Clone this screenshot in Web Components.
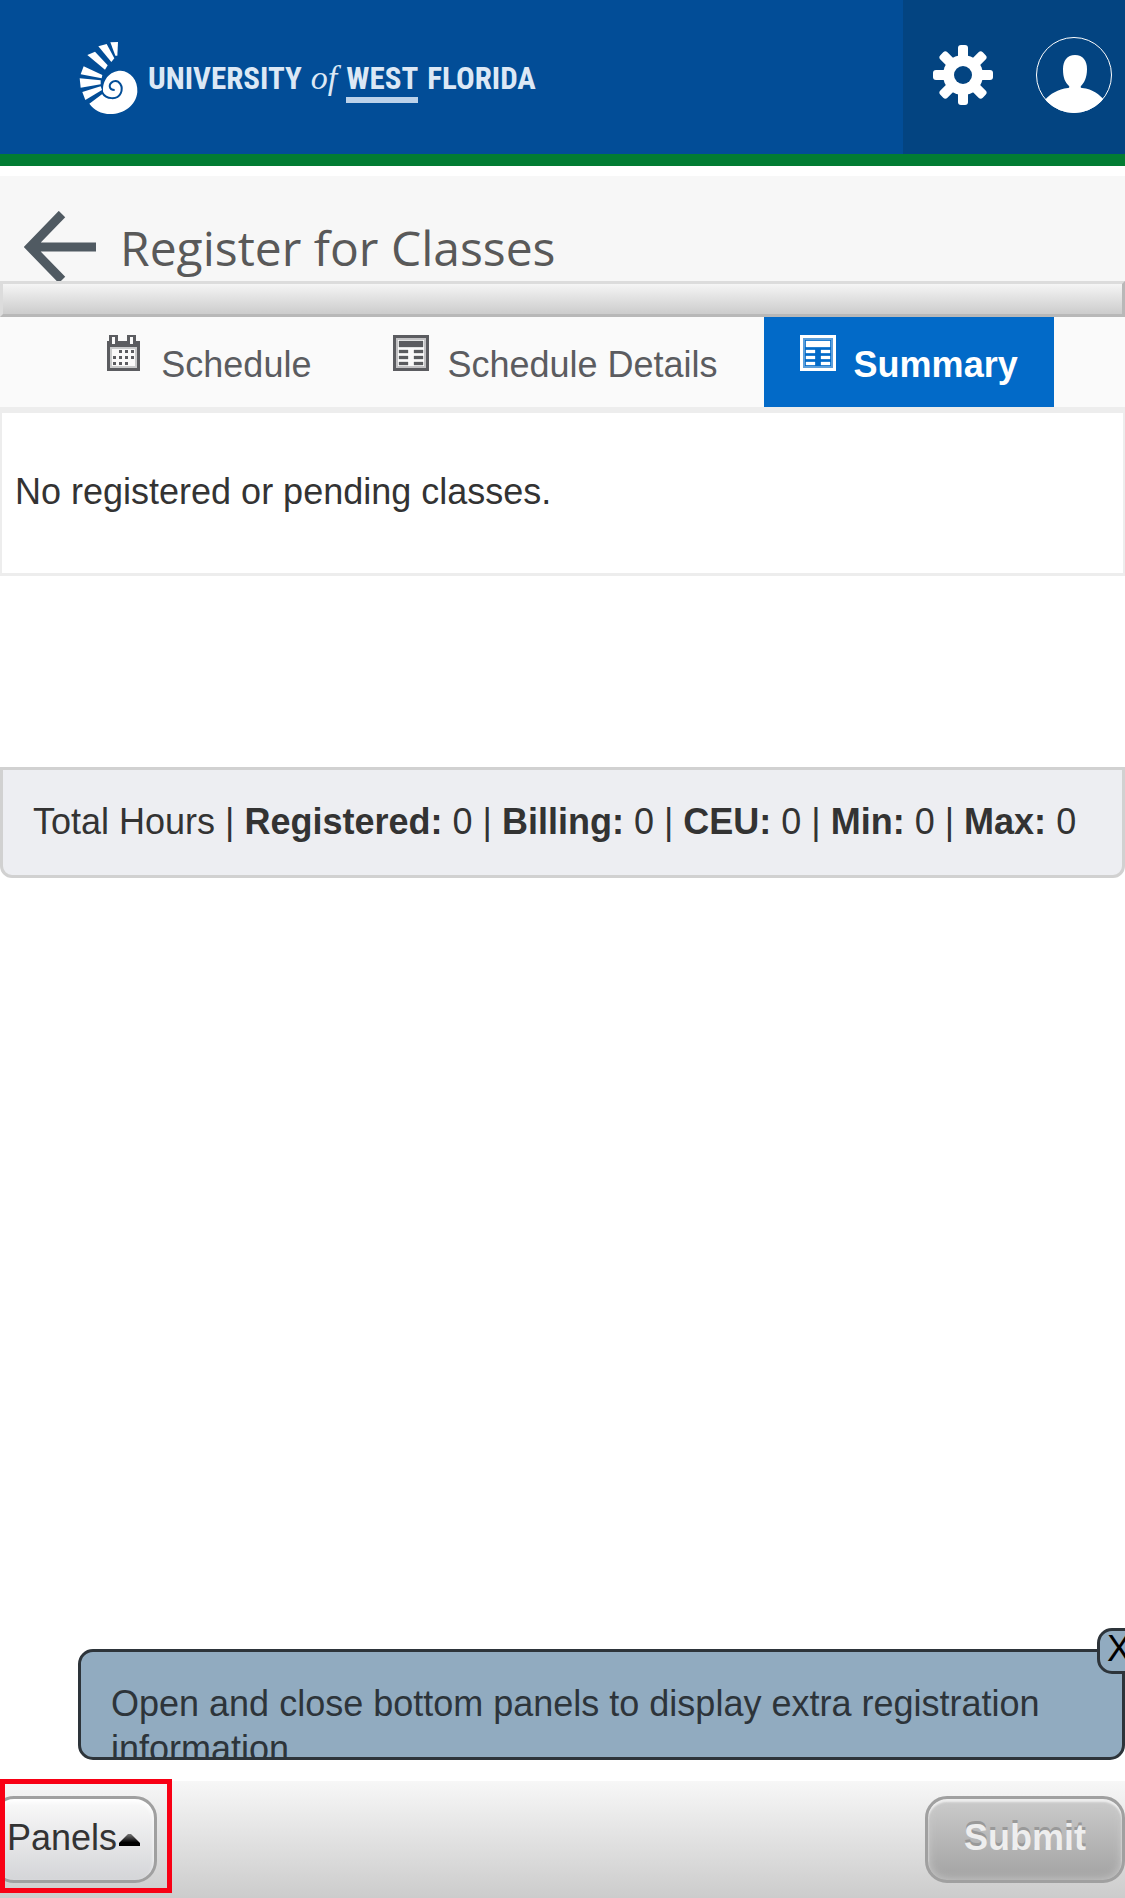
<!DOCTYPE html>
<html lang="en">
<head>
<meta charset="utf-8">
<meta name="viewport" content="width=device-width, initial-scale=1">
<title>Register for Classes</title>
<style>
  body {
    margin: 0;
    background: #fff;
    color: #333;
    font: 36px/45px "Liberation Sans", Arial, sans-serif;
  }
</style>
</head>
<body>
<registration-page>
  <site-header slot="header"></site-header>
  <page-title slot="header">Register for Classes</page-title>
  <tab-list slot="header">
    <tab-item icon="calendar">Schedule</tab-item>
    <tab-item icon="table">Schedule Details</tab-item>
    <tab-item icon="table" selected>Summary</tab-item>
  </tab-list>
  <summary-panel>No registered or pending classes.</summary-panel>
  <hours-bar>
    <hours-item label="Registered:">0</hours-item>
    <hours-item label="Billing:">0</hours-item>
    <hours-item label="CEU:">0</hours-item>
    <hours-item label="Min:">0</hours-item>
    <hours-item label="Max:">0</hours-item>
  </hours-bar>
  <help-tip slot="footer">Open and close bottom panels to display extra registration information.</help-tip>
  <bottom-bar slot="footer">
    <bar-button kind="panels">Panels</bar-button>
    <bar-button kind="submit">Submit</bar-button>
  </bottom-bar>
</registration-page>

<script>
class Component extends HTMLElement {
  constructor(template) {
    super()
    const _template = document.createElement('template')
    _template.innerHTML = template
    this.attachShadow({ mode: 'open' })
    this.shadowRoot.appendChild(_template.content.cloneNode(true))
  }
}

class RegistrationPage extends Component {
  constructor() {
    super(`
      <style>
      :host {
        display: flex;
        flex-direction: column;
        min-height: 100vh;
        overflow: hidden;
      }
      footer {
        margin-top: auto;
      }
      </style>
      <div><slot name="header"></slot></div>
      <main><slot></slot></main>
      <footer><slot name="footer"></slot></footer>
    `)
  }
}

class SiteHeader extends Component {
  constructor() {
    super(`
      <style>
      :host {
        display: block;
      }
      header {
        display: flex;
        justify-content: space-between;
        height: 154px;
        background: #024d97;
        border-bottom: 12px solid #027c33;
      }
      .brand {
        display: flex;
        align-items: center;
        gap: 8px;
        padding-left: 77px;
        color: #dce8f5;
        text-decoration: none;
      }
      .name {
        display: flex;
        align-items: baseline;
        gap: 9px;
        padding-top: 8px;
        font: bold 31px/36px "Roboto Condensed", "Liberation Sans Narrow", "Liberation Sans", sans-serif;
      }
      .name i {
        font: italic 34px/36px "Liberation Serif", serif;
      }
      .west {
        border-bottom: 6px solid #bcd2ea;
      }
      nav {
        display: flex;
        align-items: center;
        gap: 43px;
        padding: 0 12px 4px 30px;
        background: #034481;
      }
      button {
        padding: 0;
        border: 0;
        background: none;
        cursor: pointer;
      }
      svg {
        display: block;
      }
      </style>
      <header>
        <a class="brand" href="#">
          <svg width="63" height="75" viewBox="21 30 189 225" fill="#fff" aria-hidden="true">
            <path d="M121 37L144 36L142 77L136 77Z"/>
            <path d="M85 49L110 42L133 85L124 96Z"/>
            <path d="M52 75L75 65L113 106L105 119Z"/>
            <path d="M32 133L41 109L97 135L95 145Z"/>
            <path d="M29 145L92 151L92 163L32 173Z"/>
            <path d="M37 186L92 169L96 180L46 210Z"/>
            <path d="M58 221L100 190C94 150 120 122 152 122C182 124 204 150 202 186C198 228 160 252 122 252C92 252 72 240 58 221Z"/>
            <path d="M97 188C108 208 142 211 152 190C162 168 146 148 130 154C114 162 116 180 134 180" fill="none" stroke="#024d97" stroke-width="6"/>
          </svg>
          <span class="name"><span>UNIVERSITY</span><i>of</i><span class="west">WEST</span><span>FLORIDA</span></span>
        </a>
        <nav>
          <button type="button" aria-label="Settings">
            <svg width="60" height="60" viewBox="-30 -30 60 60" fill="#fff">
              <rect x="-5" y="-30" width="10" height="60" rx="3"/>
              <rect x="-5" y="-30" width="10" height="60" rx="3" transform="rotate(45)"/>
              <rect x="-5" y="-30" width="10" height="60" rx="3" transform="rotate(90)"/>
              <rect x="-5" y="-30" width="10" height="60" rx="3" transform="rotate(135)"/>
              <circle r="20"/>
              <circle r="9" fill="#034481"/>
            </svg>
          </button>
          <button type="button" aria-label="Profile">
            <svg width="77" height="77" viewBox="0 0 77 77" fill="#fff">
              <clipPath id="round"><circle cx="38" cy="38" r="38"/></clipPath>
              <path clip-path="url(#round)" d="M39 18C47 18 51 24 51 32C51 41 48 46 45 49Q44 51 46 51C57 52 64 58 68 63V77H9V63C14 57 22 52 32 51Q34 51 33 49C29 45 27 41 27 32C27 24 31 18 39 18Z"/>
              <circle cx="38" cy="38" r="37.5" fill="none" stroke="#fff" stroke-width="1"/>
            </svg>
          </button>
        </nav>
      </header>
    `)
  }
}

class PageTitle extends Component {
  constructor() {
    super(`
      <style>
      :host {
        display: block;
        margin-top: 10px;
      }
      .title {
        display: flex;
        align-items: flex-end;
        gap: 24px;
        height: 105px;
        padding-left: 24px;
        background: #f7f7f7;
      }
      h1 {
        margin: 0;
        color: #595959;
        font: 48px/66px "Open Sans", sans-serif;
      }
      a, svg {
        display: block;
      }
      .rule {
        height: 30px;
        border: 3px solid;
        border-color: #dcdcdc #b8b8b8 #b8b8b8 #dcdcdc;
        background: linear-gradient(#f5f5f5, #ccc);
      }
      </style>
      <div class="title">
        <a href="#" aria-label="Back">
          <svg width="72" height="70" viewBox="0 0 72 70">
            <path d="M38 3L6 36L38 69M6 36H72" fill="none" stroke="#505a62" stroke-width="9"/>
          </svg>
        </a>
        <h1><slot></slot></h1>
      </div>
      <div class="rule"></div>
    `)
  }
}

class TabList extends Component {
  constructor() {
    super(`
      <style>
      :host {
        display: flex;
        justify-content: center;
        gap: 10px;
        background: #fafafa;
        border-bottom: 6px solid #ededed;
      }
      </style>
      <slot></slot>
    `)
    this.setAttribute('role', 'tablist')
  }
}

const icons = {
  calendar: `
    <path fill="currentColor" d="M2 0H11V6H20V0H29V6H33V36H0V6H2Z"/>
    <path fill="#fafafa" d="M5 2H8V9H5ZM23 2H26V9H23ZM3 12H30V33H3Z"/>
    <path fill="none" stroke="currentColor" stroke-opacity=".3" stroke-width="2" d="M4 13H29V32H4Z"/>
    <path fill="currentColor" d="M12 15h3v3h-3zM18 15h3v3h-3zM24 15h3v3h-3zM6 21h3v3H6zM12 21h3v3h-3zM18 21h3v3h-3zM24 21h3v3h-3zM6 27h3v3H6zM12 27h3v3h-3zM18 27h3v3h-3z"/>`,
  table: `
    <path fill="currentColor" fill-rule="evenodd" d="M0 0H36V36H0ZM3 3V33H33V3Z"/>
    <path fill="none" stroke="currentColor" stroke-opacity=".35" stroke-width="2" d="M4 4H32V32H4Z"/>
    <path fill="currentColor" stroke="currentColor" stroke-opacity=".3" d="M6 6H30V12H6ZM6 15h9v3H6zM21 15h9v3h-9zM6 21h9v3H6zM21 21h9v3h-9zM6 27h9v3H6zM21 27h9v3h-9z"/>`
}

class TabItem extends Component {
  constructor() {
    super(`
      <style>
      :host {
        display: block;
      }
      button {
        display: flex;
        align-items: flex-start;
        gap: 18px;
        height: 90px;
        padding: 18px 36px 0;
        border: 0;
        background: none;
        color: #5b5c60;
        font: inherit;
        cursor: pointer;
      }
      :host([selected]) button {
        background: #026ac8;
        color: #fff;
        font-weight: bold;
      }
      span {
        padding-top: 7px;
      }
      </style>
      <button type="button" role="tab">
        <svg width="36" height="36" viewBox="0 0 36 36" aria-hidden="true"></svg>
        <span><slot></slot></span>
      </button>
    `)
    this.shadowRoot.querySelector('svg').innerHTML = icons[this.getAttribute('icon')]
    this.shadowRoot.querySelector('button').setAttribute('aria-selected', this.hasAttribute('selected'))
  }
}

class SummaryPanel extends Component {
  constructor() {
    super(`
      <style>
      :host {
        display: block;
        padding: 56px 13px 59px;
        border: solid #ededed;
        border-width: 0 2px 3px;
      }
      </style>
      <slot></slot>
    `)
  }
}

class HoursBar extends Component {
  constructor() {
    super(`
      <style>
      :host {
        display: flex;
        flex-wrap: wrap;
        margin-top: 191px;
        padding: 29px 30px 31px;
        border: 3px solid #d1d1d1;
        border-radius: 0 0 12px 12px;
        background: #edeef2;
      }
      </style>
      <span>Total Hours</span><slot></slot>
    `)
  }
}

class HoursItem extends Component {
  constructor() {
    super(`
      <style>
      :host {
        display: block;
      }
      span {
        white-space: pre;
      }
      </style>
      <span> | <b></b> <slot></slot></span>
    `)
    this.shadowRoot.querySelector('b').textContent = this.getAttribute('label')
  }
}

class HelpTip extends Component {
  constructor() {
    super(`
      <style>
      :host {
        display: block;
        position: relative;
        margin: 0 0 21px 78px;
        color: #2d343a;
      }
      .tip {
        box-sizing: border-box;
        max-height: 111px;
        padding: 29px 30px 0;
        overflow: hidden;
        border: 3px solid #2d343a;
        border-radius: 15px;
        background: #91abc0;
      }
      button {
        position: absolute;
        top: -21px;
        right: -18px;
        width: 46px;
        height: 46px;
        padding: 0 2px 4px 0;
        border: 3px solid #2d343a;
        border-radius: 15px;
        background: #91abc0;
        color: #000;
        font: inherit;
        line-height: 36px;
        cursor: pointer;
      }
      </style>
      <div class="tip" role="tooltip"><slot></slot></div>
      <button type="button" aria-label="Close tip">X</button>
    `)
  }
}

class BottomBar extends Component {
  constructor() {
    super(`
      <style>
      :host {
        display: flex;
        justify-content: space-between;
        position: relative;
        padding: 15px 0;
        background: linear-gradient(#f7f7f7, #ccc);
      }
      .marker {
        position: absolute;
        top: -2px;
        left: 0;
        box-sizing: border-box;
        width: 172px;
        height: 114px;
        border: 5px solid #f80014;
        pointer-events: none;
      }
      </style>
      <slot></slot>
      <div class="marker"></div>
    `)
  }
}

class BarButton extends Component {
  constructor() {
    super(`
      <style>
      :host {
        display: block;
      }
      button {
        display: flex;
        align-items: center;
        gap: 2px;
        height: 87px;
        border: 3px solid #a0a0a0;
        border-radius: 22px;
        font: inherit;
        cursor: pointer;
      }
      :host([kind="panels"]) {
        margin-left: -8px;
      }
      :host([kind="panels"]) button {
        padding: 0 14px 4px 12px;
        background: linear-gradient(#fafafa, #d4d5d8);
        box-shadow: inset 0 3px 4px #fff;
        color: #333;
      }
      :host([kind="submit"]) button {
        padding: 0 36px 4px;
        background: linear-gradient(#cbcbcb, #a3a3a3);
        box-shadow: inset 0 3px 2px #eee, inset 0 0 10px #ccc;
        color: #eee;
        font-weight: bold;
        text-shadow: 0 -3px 0 #999;
      }
      svg {
        display: none;
        margin-top: 5px;
      }
      :host([kind="panels"]) svg {
        display: block;
      }
      </style>
      <button type="button">
        <slot></slot>
        <svg width="21" height="12" viewBox="0 0 21 12" aria-hidden="true">
          <linearGradient id="shade" x2="0" y2="1"><stop stop-color="#777"/><stop offset=".7" stop-color="#000"/></linearGradient>
          <path d="M9 0H12L21 9V12H0V9Z" fill="url(#shade)"/>
        </svg>
      </button>
    `)
  }
}

window.customElements.define('registration-page', RegistrationPage)
window.customElements.define('site-header', SiteHeader)
window.customElements.define('page-title', PageTitle)
window.customElements.define('tab-list', TabList)
window.customElements.define('tab-item', TabItem)
window.customElements.define('summary-panel', SummaryPanel)
window.customElements.define('hours-bar', HoursBar)
window.customElements.define('hours-item', HoursItem)
window.customElements.define('help-tip', HelpTip)
window.customElements.define('bottom-bar', BottomBar)
window.customElements.define('bar-button', BarButton)
</script>
</body>
</html>
